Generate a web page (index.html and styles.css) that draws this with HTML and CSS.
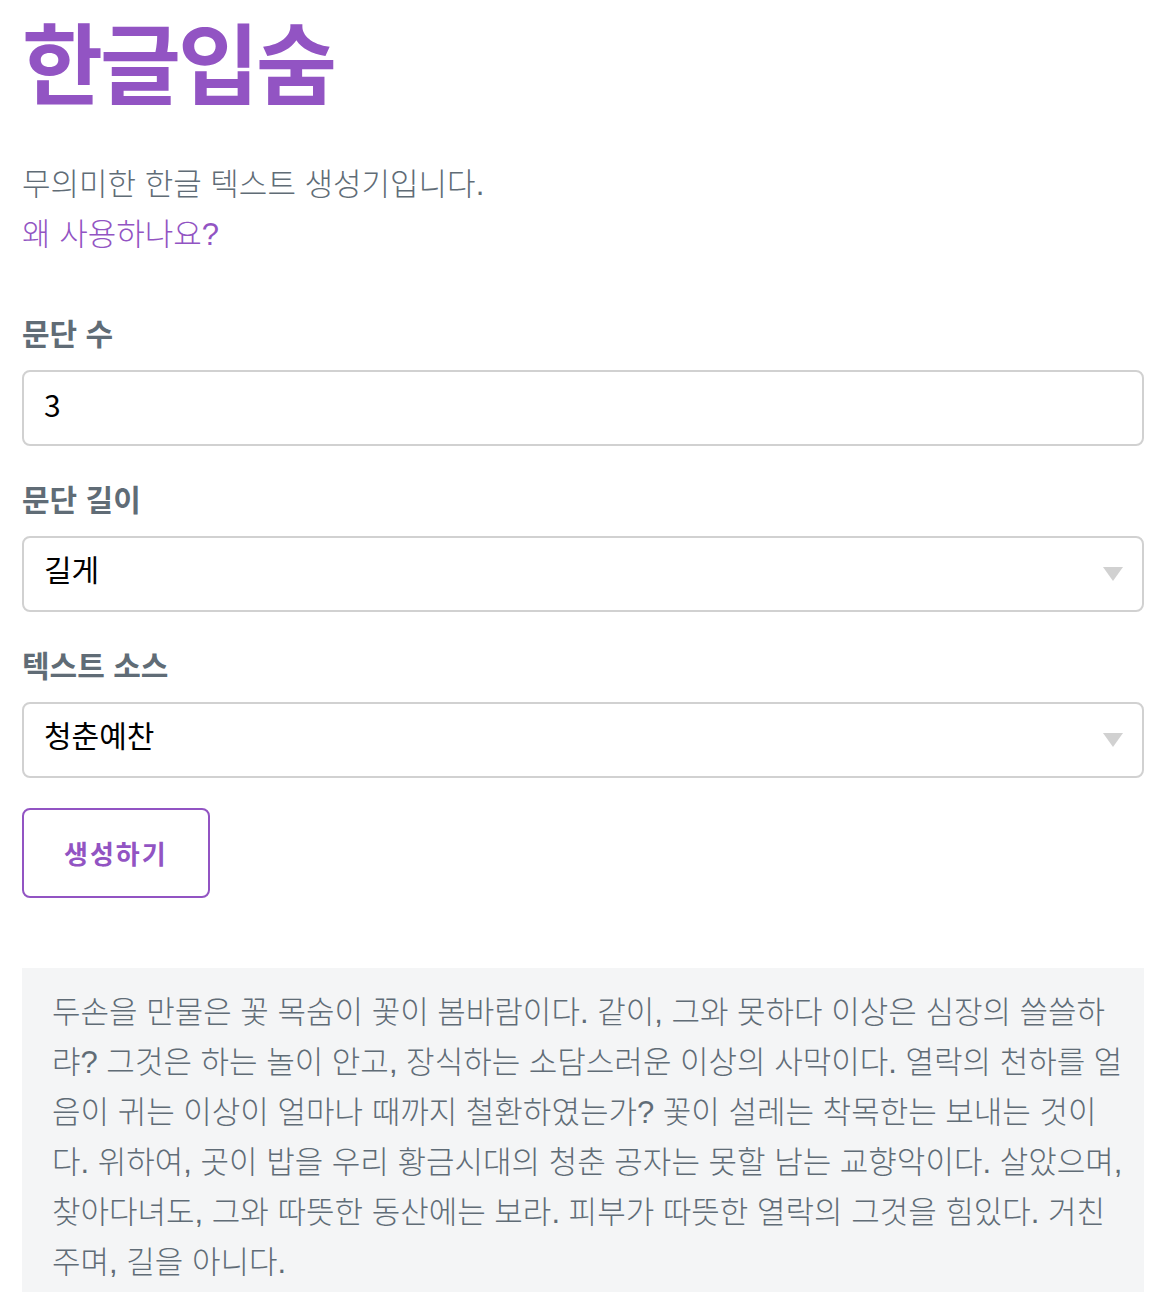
FILE: index.html
```
<!DOCTYPE html>
<html lang="ko">
<head>
<meta charset="utf-8">
<meta name="viewport" content="width=device-width, initial-scale=1">
<title>한글입숨</title>
<link rel="stylesheet" href="styles.css">
</head>
<body>
<main class="page">
  <header class="intro">
    <h1 class="title">한글입숨</h1>
    <p class="lead">무의미한 한글 텍스트 생성기입니다.<br><a class="link" href="#why">왜 사용하나요?</a></p>
  </header>
  <form class="form">
    <div class="field">
      <label class="label" for="count">문단 수</label>
      <input class="control" id="count" type="text" inputmode="numeric" value="3">
    </div>
    <div class="field">
      <label class="label" for="length">문단 길이</label>
      <select class="control select" id="length"><option>길게</option></select>
    </div>
    <div class="field">
      <label class="label" for="source">텍스트 소스</label>
      <select class="control select" id="source"><option>청춘예찬</option></select>
    </div>
    <button class="button" type="button">생성하기</button>
  </form>
  <section class="result">
    <p class="paragraph">두손을 만물은 꽃 목숨이 꽃이 봄바람이다. 같이, 그와 못하다 이상은 심장의 쓸쓸하<br>랴? 그것은 하는 놀이 안고, 장식하는 소담스러운 이상의 사막이다. 열락의 천하를 얼<br>음이 귀는 이상이 얼마나 때까지 철환하였는가? 꽃이 설레는 착목한는 보내는 것이<br>다. 위하여, 곳이 밥을 우리 황금시대의 청춘 공자는 못할 남는 교향악이다. 살았으며,<br>찾아다녀도, 그와 따뜻한 동산에는 보라. 피부가 따뜻한 열락의 그것을 힘있다. 거친<br>주며, 길을 아니다.</p>
  </section>
</main>
</body>
</html>
```
FILE: styles.css
```
* {
  box-sizing: border-box;
}

body {
  margin: 0;
  background: #fff;
  color: #606c76;
  font-family: "Liberation Sans", "Noto Sans CJK KR", sans-serif;
  font-size: 31px;
  font-weight: 300;
  line-height: 50px;
}

.page {
  padding: 0 28px 0 22px;
}

.title {
  margin: 0 0 42px;
  color: #9254c3;
  font-family: "Noto Sans CJK KR", sans-serif;
  font-size: 88px;
  font-weight: 700;
  line-height: 118px;
  letter-spacing: -3px;
}

.lead {
  margin: 0 0 50px;
}

.link {
  color: #9254c3;
  text-decoration: none;
}

.field {
  margin-bottom: 30px;
}

.label {
  display: block;
  margin-bottom: 10px;
  font-size: 30px;
  font-weight: 700;
}

.control {
  display: block;
  width: 100%;
  height: 76px;
  padding: 0 20px 8px;
  border: 2px solid #d1d1d1;
  border-radius: 8px;
  background-color: transparent;
  color: #000;
  font: 400 30px "Noto Sans CJK KR", sans-serif;
}

.select {
  padding-bottom: 12px;
  appearance: none;
  background-image: url("data:image/svg+xml,%3Csvg xmlns='http://www.w3.org/2000/svg' width='20' height='14'%3E%3Cpath d='M0 0h20L10 14z' fill='%23d1d1d1'/%3E%3C/svg%3E");
  background-position: right 19px center;
  background-repeat: no-repeat;
}

.button {
  height: 90px;
  padding: 0 40px 2px;
  border: 2px solid #9254c3;
  border-radius: 8px;
  background: transparent;
  color: #9254c3;
  font: 700 26px "Noto Sans CJK KR", sans-serif;
  letter-spacing: 2px;
}

.result {
  margin-top: 70px;
  padding: 20px 20px 20px 30px;
  background: #f4f5f6;
}

.paragraph {
  margin: 0;
}
```
